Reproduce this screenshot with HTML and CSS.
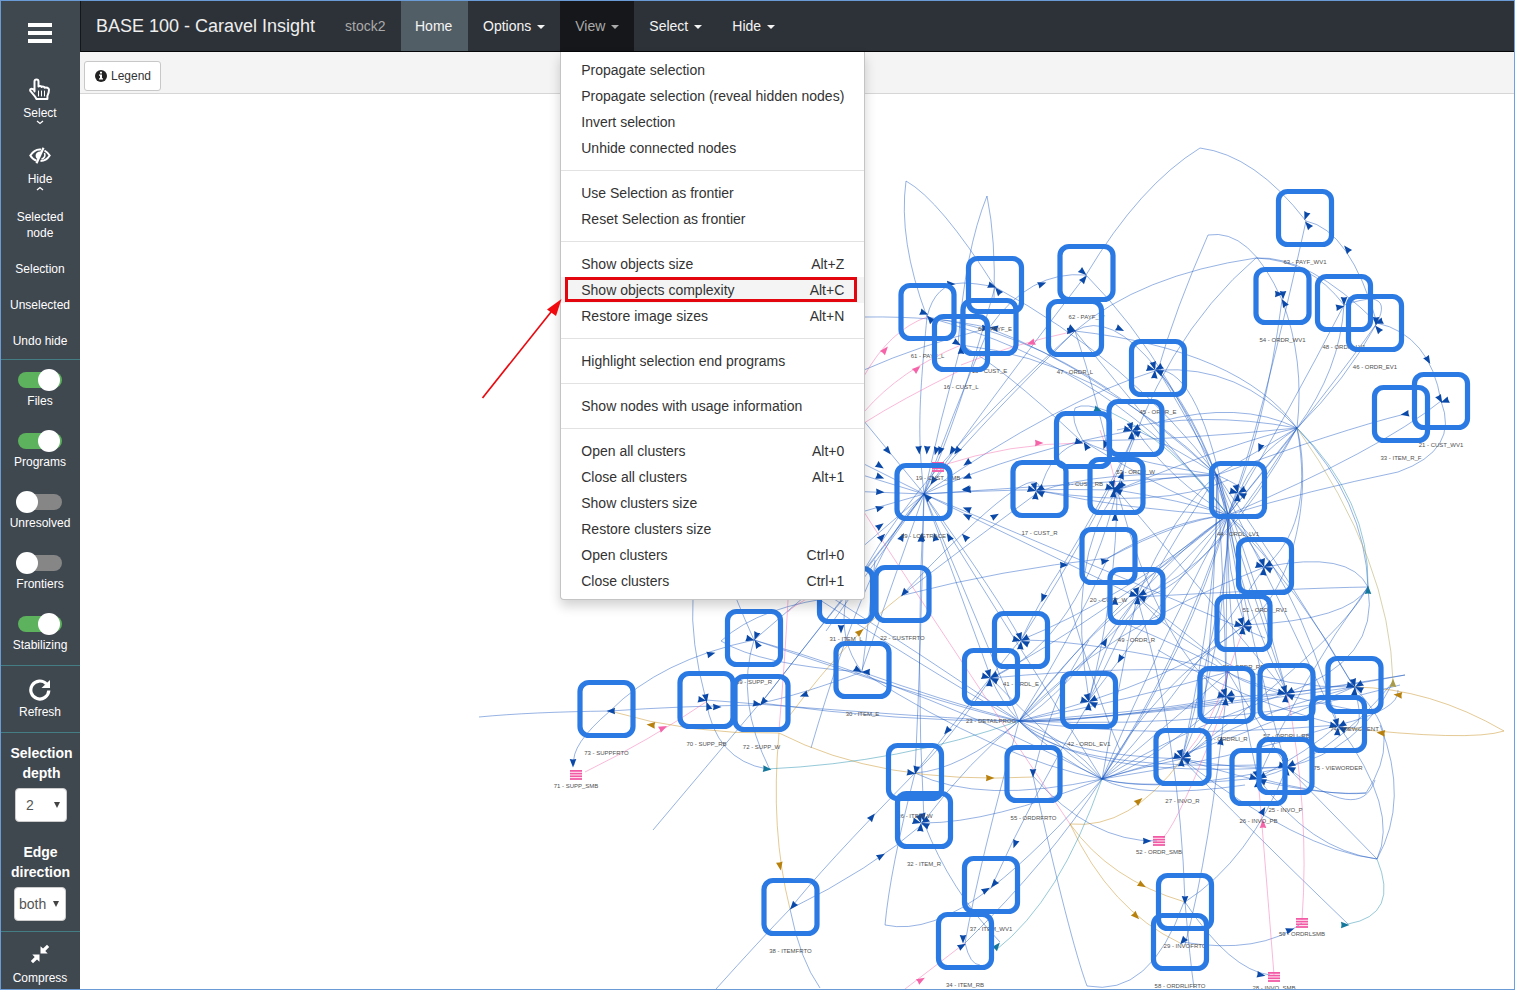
FILE: index.html
```html
<!DOCTYPE html>
<html lang="en">
<head>
<meta charset="utf-8">
<title>BASE 100 - Caravel Insight</title>
<link rel="stylesheet" href="styles.css">
</head>
<body>
<div class="app">
  <aside class="sidebar">
    <div class="tool burger">
      <svg width="24" height="20" viewBox="0 0 24 20"><path fill="#fff" d="M0 0h24v4H0zM0 8h24v4H0zM0 16h24v4H0z"/></svg>
    </div>
    <div class="tool tool-select">
      <svg width="22" height="23" viewBox="0 0 22 23" fill="none" stroke="#fff" stroke-width="2" stroke-linejoin="round" stroke-linecap="round"><path d="M5.500 13.500V3.600a2 2 0 0 1 4 0V8.500c.8-.8 2.600-.7 3.200.4 1-.7 2.500-.3 2.900.8 1.500-.6 4.400.2 4.400 2 0 3-.9 4.600-1.600 6.200V21H7.500C6 18 3.800 15.800 1.500 13.200c-1-1.700.8-3.200 2.200-2.100l1.800 1.500"/><path stroke-width="1" d="M9.500 13v5M12.500 13v5M15.500 13v5"/></svg>
      <span>Select</span>
      <svg class="chev" width="8" height="5" viewBox="0 0 8 5" fill="none" stroke="#fff" stroke-width="1.300"><path d="M1 1l3 2.500L7 1"/></svg>
    </div>
    <div class="tool tool-hide">
      <svg width="22" height="17" viewBox="0 0 22 17" fill="none" stroke="#fff" stroke-width="2"><path d="M12 2.500C7 1.800 3.500 5 1.300 8.500c1.500 2.500 3.700 4.400 6.200 5.200M15.500 3.500c2.100 1.200 3.900 3 5.200 5-2.200 3.500-5.300 5.500-9.200 5.500"/><path stroke-width="2.200" d="M14.500.8L7.500 16.200"/><path fill="#fff" stroke="none" d="M12.500 4.500C9 4 6.500 6 6.600 8.500c0 1.800.8 3 2 3.700z"/><path stroke-width="1.500" d="M15.500 6c1 2.500 0 5-3 6.300"/></svg>
      <span>Hide</span>
      <svg class="chev" width="8" height="5" viewBox="0 0 8 5" fill="none" stroke="#fff" stroke-width="1.300"><path d="M1 4l3-2.500L7 4"/></svg>
    </div>
    <div class="sub">Selected<br>node</div>
    <div class="sub">Selection</div>
    <div class="sub">Unselected</div>
    <div class="sub">Undo hide</div>
    <div class="group">
      <div class="switch on"><i></i><span>Files</span></div>
      <div class="switch on"><i></i><span>Programs</span></div>
      <div class="switch"><i></i><span>Unresolved</span></div>
      <div class="switch"><i></i><span>Frontiers</span></div>
      <div class="switch on"><i></i><span>Stabilizing</span></div>
    </div>
    <div class="group refresh">
      <svg width="22" height="22" viewBox="0 0 22 22"><path fill="none" stroke="#fff" stroke-width="3.200" d="M17.500 5A9 9 0 1 0 19.800 11.500"/><path fill="#fff" d="M21 1v8h-8.500z"/></svg>
      <span>Refresh</span>
    </div>
    <div class="group fields">
      <b>Selection<br>depth</b>
      <div class="pick pick-depth"><span>2</span><em></em></div>
      <b>Edge<br>direction</b>
      <div class="pick pick-dir"><span>both</span><em></em></div>
    </div>
    <div class="group compress">
      <svg width="20" height="20" viewBox="0 0 20 20"><path fill="#fff" d="M10.500 9.500V2.200L13 4.600 17 .8 19.200 3l-3.900 4 2.400 2.500zM9.500 10.500v7.300L7 15.400 3 19.200.8 17l3.900-4-2.400-2.500z"/></svg>
      <span>Compress</span>
    </div>
  </aside>
  <div class="page">
    <nav class="navbar">
      <div class="brand">BASE 100 - Caravel Insight</div>
      <div class="stock">stock2</div>
      <div class="nav-item home">Home</div>
      <div class="nav-item">Options<i class="caret"></i></div>
      <div class="nav-item view">View<i class="caret"></i>
        <ul class="menu">
          <li>Propagate selection</li>
          <li>Propagate selection (reveal hidden nodes)</li>
          <li>Invert selection</li>
          <li>Unhide connected nodes</li>
          <li class="sep"></li>
          <li>Use Selection as frontier</li>
          <li>Reset Selection as frontier</li>
          <li class="sep"></li>
          <li>Show objects size<kbd>Alt+Z</kbd></li>
          <li class="active">Show objects complexity<kbd>Alt+C</kbd></li>
          <li>Restore image sizes<kbd>Alt+N</kbd></li>
          <li class="sep"></li>
          <li>Highlight selection end programs</li>
          <li class="sep"></li>
          <li>Show nodes with usage information</li>
          <li class="sep"></li>
          <li>Open all clusters<kbd>Alt+0</kbd></li>
          <li>Close all clusters<kbd>Alt+1</kbd></li>
          <li>Show clusters size</li>
          <li>Restore clusters size</li>
          <li>Open clusters<kbd>Ctrl+0</kbd></li>
          <li>Close clusters<kbd>Ctrl+1</kbd></li>
        </ul>
      </div>
      <div class="nav-item">Select<i class="caret"></i></div>
      <div class="nav-item">Hide<i class="caret"></i></div>
    </nav>
    <div class="toolbar">
      <div class="legend">
        <svg width="12" height="12" viewBox="0 0 12 12"><circle cx="6" cy="6" r="6" fill="#222"/><path fill="#fff" d="M5 1.800h2v1.700H5zM4 4.500h3v3.800h1v1.200H4V8.300h1V5.700H4z"/></svg>
        <span>Legend</span>
      </div>
    </div>
    <svg class="graph" id="graph" width="1434" height="895" viewBox="80 94 1434 895"></svg>
  </div>
</div>
<svg class="pointer" width="84" height="104" viewBox="480 297 84 104"><path d="M482.500 398L555 307" stroke="#e80a10" stroke-width="1.700" fill="none"/><path d="M561.500 299l-5.500 17-9-6.500z" fill="#f00a10"/></svg>
<script src="graph.js"></script>
</body>
</html>
```
FILE: styles.css
```css
* { box-sizing: border-box; }
body {
  margin: 0;
  width: 1515px;
  height: 990px;
  overflow: hidden;
  position: relative;
  background: #fff;
  font-family: "Liberation Sans", Arial, sans-serif;
  font-size: 14px;
  color: #333;
}
.app {
  display: flex;
  width: 1515px;
  height: 990px;
  border: 1px solid #6b9bd6;
  border-right-color: #6b9fe6;
}
.sidebar {
  width: 79px;
  flex: none;
  height: 988px;
  overflow: hidden;
  background: #3f474f;
  color: #fff;
  font-size: 12px;
  line-height: 16px;
  text-align: center;
}
.tool, .sub, .refresh, .compress { padding-right: 1px; }
.tool, .refresh, .compress {
  display: flex;
  flex-direction: column;
  align-items: center;
}
.burger { height: 76px; padding-top: 22px; }
.tool-select { height: 70px; padding-top: 1px; }
.tool-select span { margin-top: 4px; }
.tool-hide { height: 52px; }
.tool-hide span { margin-top: 7px; }
.chev { margin-top: -1px; }
.sub { padding-top: 10px; padding-bottom: 10px; }
.group { border-top: 1px solid #447d84; }
.switch {
  height: 61px;
  padding: 12px 0 0 17px;
}
.switch i {
  display: block;
  width: 44px;
  height: 16px;
  border-radius: 8px;
  background: #868686;
}
.switch i::before {
  content: "";
  display: block;
  width: 22px;
  height: 22px;
  border-radius: 50%;
  background: #fff;
  transform: translate(-2px, -3px);
}
.switch.on i { background: #5cb25d; }
.switch.on i::before { transform: translate(20px, -3px); }
.switch span { display: block; margin: 5px 1px 0 -17px; }
.refresh { height: 67px; padding-top: 13px; }
.refresh span { margin-top: 3px; }
.fields { height: 199px; padding-top: 10px; }
.fields b {
  display: block;
  font-size: 14px;
  line-height: 20px;
  padding-left: 2px;
}
.fields .pick-depth + b { padding-left: 0; }
.pick {
  width: 52px;
  height: 34px;
  margin: 5px 0 20px 14px;
  border: 1px solid #ccc;
  border-radius: 4px;
  background: #fff;
  color: #555;
  font-size: 14px;
  display: flex;
  align-items: center;
  justify-content: space-between;
  padding: 0 6px 0 10px;
}
.pick-dir { margin-left: 13px; padding-left: 4px; }
.pick em {
  border: 3px solid transparent;
  border-top: 6px solid #444;
  border-bottom: 0;
}
.compress { padding-top: 12px; }
.compress span { margin-top: 6px; }

.page {
  flex: 1;
  display: flex;
  flex-direction: column;
  min-width: 0;
}
.navbar {
  height: 51px;
  flex: none;
  display: flex;
  background: #2d3238;
  border-bottom: 1px solid #050607;
  border-left: 1px solid #14171a;
  color: #f4f4f4;
  line-height: 50px;
}
.brand { width: 249px; padding-left: 15px; font-size: 18px; color: #eee; white-space: nowrap; }
.stock { width: 71px; padding-left: 15px; color: #aaa; }
.nav-item { padding: 0 15px; }
.home { width: 67px; padding-left: 14px; background: #525e65; }
.caret {
  display: inline-block;
  margin-left: 6px;
  vertical-align: middle;
  border: 4px solid transparent;
  border-top-color: currentColor;
  border-bottom: 0;
}
.view { position: relative; background: #15171a; color: #aaa; }
.menu {
  position: absolute;
  z-index: 2;
  top: 51px;
  left: 0;
  width: 305px;
  margin: 0;
  padding: 5px 0;
  list-style: none;
  background: #fff;
  border: 1px solid #c4c4c4;
  border-top: 0;
  border-radius: 0 0 4px 4px;
  box-shadow: 0 6px 12px rgba(0, 0, 0, .18);
  color: #333;
  line-height: 26px;
}
.menu li {
  display: flex;
  justify-content: space-between;
  height: 26px;
  padding: 0 20px;
  white-space: nowrap;
}
.menu kbd { font: inherit; }
.menu .sep { height: 1px; margin: 9px 0; background: #e2e2e2; }
.menu .active { position: relative; background: #f4f4f4; }
.menu .active::after {
  content: "";
  box-sizing: border-box;
  position: absolute;
  left: 4px;
  top: 0;
  width: 292px;
  height: 25px;
  border: 3px solid #e3060f;
}
.toolbar {
  height: 42px;
  flex: none;
  padding: 9px 0 0 4px;
  background: #f4f4f4;
  border-bottom: 1px solid #d6d6d6;
}
.legend {
  display: flex;
  align-items: center;
  gap: 4px;
  width: 77px;
  height: 30px;
  padding-left: 10px;
  border: 1px solid #c8c8c8;
  border-radius: 3px;
  background: #fff;
  font-size: 12px;
}
.graph { display: block; }
.edge { fill: none; stroke-width: .9; opacity: .5; }
.node { fill: none; stroke: #2b7ae4; stroke-width: 5.200; }
.label { font-size: 6px; fill: #505050; text-anchor: middle; }
.pointer { position: absolute; left: 480px; top: 297px; z-index: 3; }
```
FILE: graph.js
```js
const NS = "http://www.w3.org/2000/svg";
const svg = document.getElementById("graph");
function add(tag, attrs, text) {
  const el = document.createElementNS(NS, tag);
  for (const k in attrs) el.setAttribute(k, attrs[k]);
  if (text) el.textContent = text;
  svg.appendChild(el);
}
const BLUE = "#1857c0", PINK = "#f564a8", GOLD = "#c48a16", TEAL = "#1787a8", OLIVE = "#a99b48";

// x, y, label
const nodes = [
  [1305,218,"63 - PAYF_WV1"],[1086.5,273,"62 - PAYF_W"],[995,285,"60 - PAYF_E"],[927.5,312,"61 - PAYF_L"],
  [989.500,327,"15 - CUST_E"],[961,343,"16 - CUST_L"],[1075,328,"47 - ORDR_L"],[1158,368,"45 - ORDR_E"],
  [1282.5,296,"54 - ORDR_WV1"],[1344,303,"48 - ORDR_LV1"],[1375,323,"46 - ORDR_EV1"],[1401,414,"33 - ITEM_R_F"],
  [1441,401,"21 - CUST_WV1"],[923.500,492,"39 - LOGTRACE"],[1083,440,"18 - CUST_RB"],[1135.5,428,"53 - ORDR_W"],
  [1039.5,489,"17 - CUST_R"],[1116.5,486,"43 - ORDL_L"],[1108.5,556,"20 - CUST_W"],[1136.5,596,"49 - ORDR_R"],
  [902.5,594,"22 - CUSTFRTO"],[1021,640,"41 - ORDL_E"],[991,677,"23 - DETAILPROG"],[862.5,670,"30 - ITEM_E"],
  [846,595,"31 - ITEM_L"],[754,638,"69 - SUPP_R"],[606.5,709,"73 - SUPPFRTO"],[706.5,700,"70 - SUPP_RB"],
  [761.5,703,"72 - SUPP_W"],[790.5,907,"38 - ITEMFRTO"],[1089,700,"42 - ORDL_EV1"],[915,772,"36 - ITEM_W"],
  [924,820,"32 - ITEM_R"],[1033.5,774,"55 - ORDRFRTO"],[1182.5,757,"27 - INVO_R"],[991,885,"37 - ITEM_WV1"],
  [965,941,"34 - ITEM_RB"],[1185,902,"29 - INVOFRTO"],[1180,942,"58 - ORDRLIFRTO"],[1238,490,"44 - ORDL_LV1"],
  [1265,566,"51 - ORDR_RV1"],[1243.5,623,"50 - ORDR_RB"],[1226.5,695,"56 - ORDRLI_R"],[1286.5,692,"57 - ORDRLI_RB"],
  [1354.5,685,"74 - VIEWCLIENT"],[1338,724,"75 - VIEWORDER"],[1285.5,766,"25 - INVO_P"],[1258.5,777,"26 - INVO_PB"]
];
// storage tables: x, y, label
const tables = [[576,775,"71 - SUPP_SMB"],[938,467,"19 - CUST_SMB"],[1159,841,"52 - ORDR_SMB"],[1302,923,"59 - ORDRLSMB"],[1274,977,"28 - INVO_SMB"]];

function edge(color, list) {
  list.forEach(p => add("path", {
    class: "edge", stroke: color,
    d: p.length === 4 ? `M${p[0]} ${p[1]}L${p[2]} ${p[3]}`
     : p.length === 6 ? `M${p[0]} ${p[1]}Q${p[2]} ${p[3]} ${p[4]} ${p[5]}`
     : `M${p[0]} ${p[1]}C${p[2]} ${p[3]} ${p[4]} ${p[5]} ${p[6]} ${p[7]}`
  }));
}
function fan(x, y, ends) { edge(BLUE, ends.map(e => [x, y, ...e])); }

// logging hub
fan(924,494, [[840,392],[918,440,918,410,927,317],[940,420,961,345],[950,420,989,328],[958,420,995,287],
  [955,450,1075,331],[960,440,1086,275],[1060,400,1158,370],[1020,450,1136,430],[1020,488,1117,490],[1060,485,1217,475],
  [1137,597],[1265,638],[1102,779],[1019,721],[991,678],[1000,600,1021,640],[921,650,915,772],[915,660,924,820],[862,670],[826,631],
  [754,640],[761,703],[846,596],[820,524],[820,490],[820,462],[820,442],[870,545,811,748]]);
// upper loops
edge(BLUE, [[927,317,898,240,906,181],[906,181,940,200,995,287],[987,196,965,250,958,345],[987,196,996,240,994,300],
  [1086,275,1140,185,1200,148],[1200,148,1255,155,1306,221],[1306,221,1350,230,1377,323],[927,317,935,283,963,283],[963,283,975,283,995,287],
  [989,328,1030,270,1086,275],[864,317,940,316,989,328],[864,370,920,345,989,328],[1075,331,1110,310,1158,370],[1075,331,1140,275,1256,258],
  [1256,258,1308,255,1377,323],[1256,258,1310,260,1344,305],[1256,258,1160,340,1117,490],[1208,235,1250,228,1282,300],[1208,235,1175,310,1158,370],
  [1344,305,1362,299,1372,299],[1372,299,1388,301,1377,323],[1377,323,1430,335,1441,401],[1441,401,1460,450,1398,472],[1398,472,1310,490,1228,515],
  [1441,401,1380,450,1228,515],[1405,414,1340,430,1217,475],[1158,370,1200,370,1228,515],[1158,370,1240,365,1297,428],
  [1075,331,1240,350,1297,428],[1086,275,1180,370,1228,515],[927,317,1020,330,1110,390],[927,317,1120,370,1228,515],[961,345,1100,360,1217,475],
  [989,328,1100,370,1217,475],[995,287,1130,360,1217,475],[961,345,1000,365,1080,440],[1075,331,1098,400,1110,460],[1075,331,920,470,864,570]]);
// right hubs
fan(1297,428, [[1305,360,1282,300],[1346,380,1377,323],[1340,370,1344,305],[1240,400,1158,422],[1200,410,1117,430],[1180,440,1083,441],
  [1240,440,1117,490],[1250,460,1240,492],[1228,515],[1217,475],[1190,600,1137,597],[1310,500,1295,540,1265,567],[1313,490,1295,590,1245,625],[1220,570,1137,597],[1365,500,1368,587]]);
fan(1228,515, [[1180,500,1083,441],[1170,480,1136,430],[1180,500,1117,490],[1130,510,1040,491],[1170,520,1108,558],
  [1190,540,1137,597],[1120,600,1021,640],[1100,620,991,678],[1120,630,1019,721],[1190,650,1102,779],[1150,620,1089,700],[1250,540,1265,567],
  [1225,570,1245,625],[1226,600,1226,697],[1255,600,1287,693],[1300,590,1354,687],[1225,660,1182,759],[1250,640,1286,767],
  [1225,640,1258,778],[1290,560,1338,725],[1240,600,1287,693],[1234,560,1182,759],[1260,430,1306,221],[1265,430,1282,300],[1290,410,1344,305],[1330,390,1377,323],
  [1210,440,1158,370],[1207,430,1158,370],[1130,400,1075,331],[1130,580,1019,721]]);
fan(1217,475, [[1200,440,1158,370],[1180,450,1136,430],[1220,580,1182,759],[1216,590,1203,720],[1225,600,1226,697],[1260,590,1287,693],
  [1290,580,1354,687],[1250,490,1240,492],[1230,530,1245,625],[1175,510,1137,597],[1280,600,1338,725],[1160,475,1117,490],[1120,460,1083,441],[1100,470,1040,491],[1140,590,1089,700]]);
// centre crossings
edge(BLUE, [[902,595,1040,450,1040,491],[902,595,960,550,1040,491],[904,595,1000,570,1108,558],[1108,558,1180,520,1228,515],[1136,430,1115,480,1060,570],
  [1060,570,1040,600,1021,640],[1117,490,1065,560,1089,700],[1117,490,1117,590,1089,700],[1117,490,1080,640,991,678],[1136,430,1110,500,1021,640],
  [1137,597,1080,640,1019,721],[1137,597,1100,650,1089,700],[1137,597,1120,680,1102,779],[1021,640,1090,640,1230,672],[991,678,1130,665,1230,672],
  [1137,597,1300,588,1368,587],[1265,567,1350,550,1368,587],[1245,625,1350,620,1368,587],[1368,587,1340,640,1182,759],[1368,587,1380,660,1287,693],
  [1368,587,1300,680,1258,778],[1137,597,1220,690,1354,687],[1117,490,1160,650,1226,697],[1117,490,1210,600,1287,693],[1083,441,1070,420,1075,408],[1075,408,1085,402,1110,412],
  [1040,491,1050,450,1083,441],[1040,491,1160,510,1228,480],[1060,570,1090,680,1120,750],[1137,597,1180,740,1185,902]]);
// detail hub and invoices hub
fan(1019,721, [[960,710,754,640],[960,720,706,700],[900,722,761,703],[940,700,862,672],[1060,725,1226,700],[1120,720,1354,687],
  [1130,720,1405,675],[1060,755,1182,759],[1060,770,1258,765],[1080,780,1287,767],[1150,740,1338,725],[1060,700,1137,597],[1000,700,991,678],[970,760,924,821],
  [960,770,915,773],[980,860,965,943],[1070,640,1108,558],[1180,680,1245,625],[1100,630,1265,567],[1240,730,1400,685],[960,690,820,600],[930,660,820,590],[1130,700,1228,672]]);
fan(1102,779, [[1060,760,1019,721],[1070,740,1019,721],[1000,760,862,672],[990,823,924,823],[980,805,915,773],[1040,850,991,888],[1050,860,965,943],
  [1130,770,1182,759],[1140,790,1258,778],[1160,795,1287,767],[1150,765,1226,697],[1140,800,1245,785],[1180,730,1287,693],[1150,690,1245,625],[1160,720,1265,567],[1160,640,1240,492],
  [1240,740,1354,687],[1180,660,1228,515],[1060,750,991,678],[930,690,754,640],[1230,760,1338,725],[1150,740,1228,672]]);
fan(1228,672, [[1250,690,1354,710],[1220,730,1182,759],[1250,710,1287,767],[1240,680,1287,693],[1210,650,1137,597],[1200,655,1117,620],[1224,690,1226,697]]);
// lower left
edge(BLUE, [[479,717,530,712,610,711],[610,711,680,706,761,705],[754,640,660,660,610,711],[610,711,570,745,574,765],
  [706,700,690,640,693,598],[736,598,745,620,754,640],[754,640,735,700,770,770],[706,700,715,760,767,769],[721,641,760,605,846,596],[721,641,760,665,862,672],
  [761,703,800,695,862,672],[761,703,835,608,846,596],[653,830,760,703],[846,600,838,640,862,672],[862,672,870,610,875,560],
  [790,909,820,870,915,773],[790,909,870,870,924,823],[716,989,760,940,790,909],[790,909,800,960,820,988],[915,773,890,870,885,925],[885,925,930,935,991,888],
  [924,823,950,890,1000,942],[991,888,1030,800,1089,703],[915,773,1020,640],[915,773,950,740,991,678],[1033,776,1050,700,1089,640],[1033,776,1090,842,1157,841],
  [1033,776,1070,940,1087,986],[1087,986,1150,998,1184,902],[965,943,970,965,980,965]]);
// lower right
edge(BLUE, [[1185,902,1190,960,1194,988],[1185,902,1250,860,1287,767],[1182,942,1260,955,1302,923],[1185,902,1230,970,1270,975],[1226,697,1210,850,1185,945],
  [1182,759,1240,820,1348,924],[1258,778,1310,850,1377,859],[1182,759,1300,850,1377,859],[1287,767,1377,859],[1338,725,1400,810,1377,859],
  [1377,859,1410,800,1380,725],[1287,767,1360,825,1375,780],[1384,740,1385,765,1366,793],[1384,740,1385,720,1354,687],[1354,687,1370,740,1338,725],
  [1258,778,1330,760,1393,682],[1287,767,1360,750,1393,682],[1338,725,1400,710,1398,690],[1226,697,1300,695,1405,675],[1158,650,1240,700,1338,725],
  [1182,759,1230,720,1354,687],[1182,759,1240,770,1287,767],[1258,778,1310,750,1338,725],[1226,697,1170,710,1019,721],[1366,793,1330,797,1258,778],[1366,793,1300,797,1182,759]]);
edge(PINK, [[864,376,890,330,927,317],[864,412,900,370,961,345],[864,423,900,400,961,370],[961,365,1010,345,1075,331],[940,466,1010,443,1083,443],
  [864,512,920,600,1070,824],[864,575,800,598,788,612],[788,600,785,660,779,730],[706,702,650,740,585,772],[1228,672,1245,625],[1226,700,1180,820,1163,838],
  [1302,920,1310,810,1287,693],[1274,975,1265,860,1258,778],[905,989,930,970,965,943],[1117,490,1108,450,1100,430],[1228,672,1215,720,1182,759]]);
edge(GOLD, [[902,595,850,635,790,715],[779,733,690,735,610,711],[779,733,880,785,1033,777],[779,733,770,830,790,909],[1070,824,1130,830,1182,759],
  [1070,824,1110,880,1185,902],[1070,824,1110,910,1180,943],[1354,687,1430,688,1504,731],[1504,731,1470,742,1338,727]]);
edge(TEAL, [[767,769,900,763,1019,721],[1102,779,1060,900,996,950],[1348,924,1400,915,1377,859],[1297,428,1370,500,1368,587],[1110,412,1170,440,1228,515]]);
edge(OLIVE, [[1297,428,1390,560,1393,682]]);

// arrowhead pointing along angle a (degrees)
function arrow(x, y, a, c) {
  add("path", { d: "M4.500 0L-4 3.300L-3.500 0L-4 -3.300Z", fill: c || "#0b49a8", transform: `translate(${x} ${y}) rotate(${a})` });
}
[[888,451],[919,450],[927,450],[936,451],[940,451],[952,451],[957,451],[967,463],[967,477],[966,489],[967,490],[967,509],[967,516],[965,537],
 [949,537],[935,537],[921,538],[922,537],[902,537],[882,537],[880,526],[880,508],[880,492],[880,477],[880,466],[933,481],[927,497]].forEach(([x, y]) =>
  arrow(x, y, Math.atan2(494 - y, 924 - x) * 180 / Math.PI));
[[951,284,0],[992,286,20],[998,291,230],[924,313,20],[930,319,230],[1042,284,-20],[1083,272,40],[1084,279,-50],[986,328,0],[994,328,190],
 [957,343,30],[961,350,270],[1071,331,0],[1072,329,30],[1120,329,25],[1306,216,110],[1308,225,230],[1347,249,230],[1279,294,0],[1283,295,90],[1284,303,240],
 [1340,307,-10],[1344,301,90],[1376,321,90],[1379,322,160],[1378,329,230],[1428,360,60],[1405,414,170],[1440,399,60],[1445,401,160],
 [995,516,-30],[1064,565,0],[1043,598,110],[1105,561,-10],[1079,442,15],[1086,446,240],[1105,445,110],[1117,489,-20],[1121,486,130],[1122,475,-70],[1115,517,270],
 [1105,642,-60],[1120,659,120],[1115,601,270],[904,593,130],[1260,448,110],[841,629,90],[858,670,30],[866,672,180],[711,654,-15],[750,639,15],[756,636,110],[757,644,240],
 [611,711,180],[573,763,90],[702,700,10],[706,698,80],[708,706,250],[717,707,0],[757,704,10],[763,702,130],[804,695,160],[793,906,130],
 [872,817,-50],[881,856,-30],[911,773,10],[916,770,100],[947,731,130],[923,817,80],[1015,844,110],[986,890,-30],[994,884,130],[963,939,90],[962,946,-30],
 [1033,773,90],[1147,841,0],[1185,900,90],[1183,941,130],[1221,741,-80],[1263,811,-60],[1290,930,-20],[1261,975,10]].forEach(a => arrow(...a));
// arrow clusters where several edges end
[[1155,370],[1132,431],[1036,491],[1114,489],[1138,596],[1021,641],[990,678],[1089,702],[1238,493],[1264,567],[1243,626],[1226,697],[1286,694],
 [1355,687],[1338,727],[1287,767],[1258,779],[1182,758],[921,823]].forEach(([x, y]) =>
  [15, 75, 150, 205, 275].forEach(a => arrow(x - 4.500 * Math.cos(a * Math.PI / 180), y - 4.500 * Math.sin(a * Math.PI / 180), a)));
[[885,350,-50],[917,369,-40],[1031,343,160],[1039,443,0],[663,728,-25],[1263,824,270],[921,980,-30]].forEach(a => arrow(...a, PINK));
[[860,632,-40],[651,725,185],[990,778,0],[780,866,80],[1139,801,-40],[1142,885,30],[1136,916,45],[1398,695,185],[1381,733,185]].forEach(a => arrow(...a, "#b8800c"));
[[767,769,5],[997,946,-50],[1345,925,0],[1368,590,270],[1098,410,20]].forEach(a => arrow(...a, "#14789c"));
arrow(1393, 683, 270, OLIVE);

nodes.forEach(([x, y, t]) => add("text", { class: "label", x, y: y + 45.500 }, t));
tables.forEach(([x, y, t]) => {
  for (let i = 0; i < 4; i++) add("rect", { x: x - 6, y: y - 5 + i * 2.700, width: 12, height: 1.800, fill: "#f35aa6" });
  add("text", { class: "label", x, y: y + 12.500 }, t);
});
nodes.forEach(([x, y]) => add("rect", { class: "node", x: x - 26.500, y: y - 26.500, width: 53, height: 53, rx: 9 }));
```
